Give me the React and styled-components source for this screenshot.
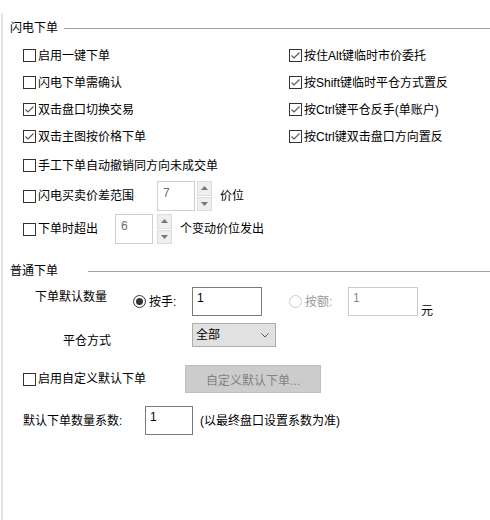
import styled, { createGlobalStyle } from 'styled-components';

const GlobalStyle = createGlobalStyle`
  html, body {
    margin: 0;
    padding: 0;
    background: #fff;
  }
  body {
    font-family: "Liberation Sans", "Noto Sans CJK SC", sans-serif;
    font-size: 12px;
    color: #000;
  }
`;

const Frame = styled.div`
  margin: 13px 0 0 1px;
  height: 507px;
  border-left: 2px solid #e2e2e2;
  display: flex;
  flex-direction: column;
  overflow: hidden;
`;

const GroupTitle = styled.div`
  display: flex;
  align-items: center;
  height: 16px;
  line-height: 16px;
  padding-left: 7px;
  margin-top: ${(p) => p.$top}px;
  gap: ${(p) => p.$gap}px;

  &::after {
    content: '';
    flex: 1;
    height: 1px;
    background: #a0a0a0;
  }
`;

const CheckGrid = styled.div`
  display: grid;
  grid-template-columns: 266px 1fr;
  grid-auto-rows: 27px;
  align-items: center;
  padding-left: 20px;
  margin-top: 6px;
`;

const Row = styled.div`
  display: flex;
  align-items: ${(p) => p.$align || 'center'};
  height: ${(p) => p.$h}px;
  margin-top: ${(p) => p.$top || 0}px;
  padding-left: ${(p) => p.$left}px;
`;

const CheckLabel = styled.label`
  display: flex;
  align-items: center;
  gap: 2px;
  line-height: 16px;
  white-space: nowrap;
  width: ${(p) => (p.$w ? `${p.$w}px` : 'auto')};
  flex-shrink: 0;
`;

const Box = styled.span`
  width: 13px;
  height: 13px;
  box-sizing: border-box;
  border: 1px solid #333;
  background: #fff;
  display: inline-flex;
  align-items: center;
  justify-content: center;
`;

const Check = ({ checked, label, w }) => (
  <CheckLabel $w={w}>
    <Box>
      {checked && (
        <svg width="11" height="11" viewBox="0 0 11 11">
          <path d="M1.5 5.5 L4 8 L9.5 2.5" fill="none" stroke="#555" strokeWidth="1.1" />
        </svg>
      )}
    </Box>
    {label}
  </CheckLabel>
);

const SpinInput = styled.div`
  width: 38px;
  height: 30px;
  box-sizing: border-box;
  border: 1px solid #cfcfcf;
  color: #6d6d6d;
  padding: 3px 0 0 5px;
  line-height: 16px;
`;

const SpinButtons = styled.div`
  width: 15px;
  height: 30px;
  margin-left: ${(p) => p.$gap}px;
  display: flex;
  flex-direction: column;
  gap: 1px;
`;

const SpinButton = styled.div`
  flex: 1;
  background: #efefef;
  border: 1px solid #dcdcdc;
  display: flex;
  align-items: center;
  justify-content: center;
`;

const Arrow = ({ up }) => (
  <svg width="7" height="4" viewBox="0 0 7 4">
    <path d={up ? 'M0 4 L3.5 0 L7 4 Z' : 'M0 0 L3.5 4 L7 0 Z'} fill="#777" />
  </svg>
);

const Spinner = ({ value, gap }) => (
  <>
    <SpinInput>{value}</SpinInput>
    <SpinButtons $gap={gap}>
      <SpinButton>
        <Arrow up />
      </SpinButton>
      <SpinButton>
        <Arrow />
      </SpinButton>
    </SpinButtons>
  </>
);

const Text = styled.span`
  line-height: 16px;
  white-space: nowrap;
  margin-left: ${(p) => p.$ml || 0}px;
  width: ${(p) => (p.$w ? `${p.$w}px` : 'auto')};
  flex-shrink: 0;
  align-self: ${(p) => p.$self || 'auto'};
  margin-top: ${(p) => p.$mt || 0}px;
  margin-bottom: ${(p) => p.$mb || 0}px;
  color: ${(p) => (p.$muted ? '#9a9a9a' : '#000')};
`;

const RadioLabel = styled.label`
  display: flex;
  align-items: center;
  gap: 3px;
  width: ${(p) => p.$w}px;
  margin-left: ${(p) => p.$ml || 0}px;
  flex-shrink: 0;
  line-height: 16px;
  color: ${(p) => (p.$disabled ? '#9a9a9a' : '#000')};
`;

const Dot = styled.span`
  width: 13px;
  height: 13px;
  box-sizing: border-box;
  border-radius: 50%;
  border: 1px solid ${(p) => (p.$disabled ? '#cccccc' : '#333')};
  display: inline-flex;
  align-items: center;
  justify-content: center;

  &::after {
    content: '';
    width: 7px;
    height: 7px;
    border-radius: 50%;
    background: #333;
    display: ${(p) => (p.$checked ? 'block' : 'none')};
  }
`;

const Radio = ({ checked, disabled, label, w, ml }) => (
  <RadioLabel $w={w} $ml={ml} $disabled={disabled}>
    <Dot $checked={checked} $disabled={disabled} />
    {label}
  </RadioLabel>
);

const Field = styled.div`
  width: ${(p) => p.$w}px;
  height: 29px;
  box-sizing: border-box;
  border: 1px solid ${(p) => (p.$disabled ? '#cccccc' : '#7a7a7a')};
  color: ${(p) => (p.$disabled ? '#8a8a8a' : '#000')};
  padding: 2px 0 0 4px;
  line-height: 16px;
  flex-shrink: 0;
`;

const Select = styled.div`
  width: 84px;
  height: 24px;
  box-sizing: border-box;
  background: #e1e1e1;
  border: 1px solid #adadad;
  display: flex;
  align-items: center;
  justify-content: space-between;
  padding: 0 6px 0 3px;
  line-height: 16px;
`;

const Button = styled.div`
  width: 136px;
  height: 28px;
  box-sizing: border-box;
  background: #cccccc;
  border: 1px solid #bfbfbf;
  color: #838383;
  display: flex;
  align-items: center;
  justify-content: center;
`;

export default function App() {
  return (
    <>
      <GlobalStyle />
      <Frame>
        <GroupTitle $top={7} $gap={6}>闪电下单</GroupTitle>
        <CheckGrid>
          <Check label="启用一键下单" />
          <Check checked label="按住Alt键临时市价委托" />
          <Check label="闪电下单需确认" />
          <Check checked label="按Shift键临时平仓方式置反" />
          <Check checked label="双击盘口切换交易" />
          <Check checked label="按Ctrl键平仓反手(单账户)" />
          <Check checked label="双击主图按价格下单" />
          <Check checked label="按Ctrl键双击盘口方向置反" />
        </CheckGrid>
        <Row $h={31} $left={20}>
          <Check label="手工下单自动撤销同方向未成交单" />
        </Row>
        <Row $h={30} $left={20}>
          <Check label="闪电买卖价差范围" w={134} />
          <Spinner value="7" gap={2} />
          <Text $ml={8}>价位</Text>
        </Row>
        <Row $h={30} $top={3} $left={20}>
          <Check label="下单时超出" w={92} />
          <Spinner value="6" gap={4} />
          <Text $ml={8}>个变动价位发出</Text>
        </Row>

        <GroupTitle $top={19} $gap={30}>普通下单</GroupTitle>
        <Row $h={29} $top={8} $left={32}>
          <Text $w={98} $self="flex-start" $mt={2}>下单默认数量</Text>
          <Radio checked label="按手:" w={59} />
          <Field $w={70}>1</Field>
          <Radio disabled label="按额:" w={59} ml={27} />
          <Field $w={70} $disabled>1</Field>
          <Text $ml={3} $self="flex-end" $mb={-3}>元</Text>
        </Row>
        <Row $h={24} $top={7} $left={60}>
          <Text $w={129} $self="flex-end" $mb={-2}>平仓方式</Text>
          <Select>
            全部
            <svg width="8" height="5" viewBox="0 0 8 5">
              <path d="M0.5 0.5 L4 4 L7.5 0.5" fill="none" stroke="#555" strokeWidth="1" />
            </svg>
          </Select>
        </Row>

        <Row $h={28} $top={18} $left={20}>
          <Check label="启用自定义默认下单" w={162} />
          <Button>自定义默认下单...</Button>
        </Row>
        <Row $h={29} $top={13} $left={20}>
          <Text $w={122}>默认下单数量系数:</Text>
          <Field $w={48}>1</Field>
          <Text $ml={7}>(以最终盘口设置系数为准)</Text>
        </Row>
      </Frame>
    </>
  );
}
